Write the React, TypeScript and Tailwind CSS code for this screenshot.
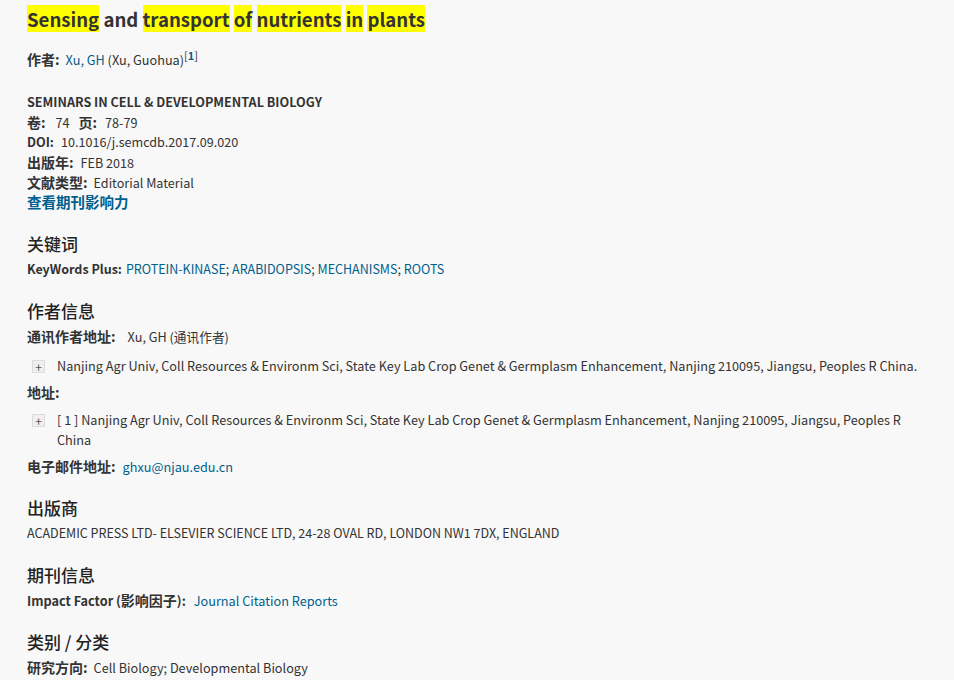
import React from "react";

const Hl = ({ children }: { children: React.ReactNode }) => (
  <span className="bg-[#ffff00]">{children}</span>
);

const Link = ({ children, className = "" }: { children: React.ReactNode; className?: string }) => (
  <a href="#" className={"text-[#005f8c] " + className}>
    {children}
  </a>
);

const Label = ({ children, className = "" }: { children: React.ReactNode; className?: string }) => (
  <span className={"mr-[6px] text-[14px] font-bold text-[#333] " + className}>{children}</span>
);

const PlusRow = ({ children }: { children: React.ReactNode }) => (
  <div className="flex items-start">
    <span className="mt-[4px] ml-[5px] flex h-[13px] w-[13px] shrink-0 items-center justify-center border border-[#dcdcdc] bg-[#efefef] text-[12px] leading-none text-[#555]">
      +
    </span>
    <div className="ml-[12px] text-[12.7px] leading-[20px]">{children}</div>
  </div>
);

const Heading = ({ children }: { children: React.ReactNode }) => (
  <h2 className="mt-[20px] mb-[3px] h-[24px] text-[17px] leading-[24px] font-medium text-[#222]">{children}</h2>
);

export default function App() {
  return (
    <div
      className="min-h-[680px] bg-[#f8f8f8] pt-[6px] pr-[24px] pl-[27px] text-[#333]"
      style={{ fontFamily: '"Noto Sans CJK SC", "Noto Sans", sans-serif' }}
    >
      {/* Title */}
      <h1 className="h-[26px] text-[18.6px] leading-[26px] font-bold text-[#333]">
        <Hl>Sensing</Hl> and <Hl>transport</Hl> <Hl>of</Hl> <Hl>nutrients</Hl> <Hl>in</Hl> <Hl>plants</Hl>
      </h1>

      <div className="mt-[17px] h-[20px] text-[12.7px] leading-[20px]">
        <Label className="mr-[0px]">作者:</Label>
        <Link>Xu, GH</Link> (Xu, Guohua)
        <sup className="text-[11px]">
          [<Link className="font-bold">1</Link>]
        </sup>
      </div>

      {/* Source */}
      <div className="mt-[23px] text-[12.6px] leading-[20px]">
        <div className="h-[20px] font-bold">SEMINARS IN CELL &amp; DEVELOPMENTAL BIOLOGY</div>
        <div className="h-[20px]">
          <Label className="mr-[10px]">卷:</Label>74
          <Label className="mr-[8px] ml-[9px]">页:</Label>78-79
        </div>
        <div className="h-[20px]">
          <span className="mr-[7px] font-bold">DOI:</span>10.1016/j.semcdb.2017.09.020
        </div>
        <div className="h-[20px]">
          <Label className="mr-[7px]">出版年:</Label>FEB 2018
        </div>
        <div className="h-[20px]">
          <Label className="mr-[4px]">文献类型:</Label>Editorial Material
        </div>
        <div className="h-[20px]">
          <Link className="text-[14.5px] font-bold">查看期刊影响力</Link>
        </div>
      </div>

      {/* Keywords */}
      <Heading>关键词</Heading>
      <div className="h-[20px] text-[12.5px] leading-[20px]">
        <span className="mr-[4px] font-bold">KeyWords Plus:</span>
        <Link>PROTEIN-KINASE</Link>; <Link>ARABIDOPSIS</Link>; <Link>MECHANISMS</Link>; <Link>ROOTS</Link>
      </div>

      {/* Author info */}
      <Heading>作者信息</Heading>
      <div className="h-[20px] text-[12.7px] leading-[20px]">
        <Label className="mr-[12px]">通讯作者地址:</Label>Xu, GH (通讯作者)
      </div>
      <div className="mt-[10px]">
        <PlusRow>
          Nanjing Agr Univ, Coll Resources &amp; Environm Sci, State Key Lab Crop Genet &amp; Germplasm Enhancement,
          Nanjing 210095, Jiangsu, Peoples R China.
        </PlusRow>
      </div>
      <div className="mt-[6px] h-[20px] text-[14px] leading-[20px] font-bold">地址:</div>
      <div className="mt-[8px]">
        <PlusRow>
          [ 1 ] Nanjing Agr Univ, Coll Resources &amp; Environm Sci, State Key Lab Crop Genet &amp; Germplasm
          Enhancement, Nanjing 210095, Jiangsu, Peoples R China
        </PlusRow>
      </div>
      <div className="mt-[6px] h-[20px] text-[12.7px] leading-[20px]">
        <Label className="mr-[7px]">电子邮件地址:</Label>
        <Link>ghxu@njau.edu.cn</Link>
      </div>

      {/* Publisher */}
      <Heading>出版商</Heading>
      <div className="h-[20px] text-[12.5px] leading-[20px]">
        ACADEMIC PRESS LTD- ELSEVIER SCIENCE LTD, 24-28 OVAL RD, LONDON NW1 7DX, ENGLAND
      </div>

      {/* Journal */}
      <Heading>期刊信息</Heading>
      <div className="h-[20px] text-[12.7px] leading-[20px]">
        <span className="mr-[8px] font-bold">
          Impact Factor (<span className="text-[14px]">影响因子</span>):
        </span>
        <Link>Journal Citation Reports</Link>
      </div>

      {/* Categories */}
      <Heading>类别 / 分类</Heading>
      <div className="h-[20px] text-[12.7px] leading-[20px]">
        <Label className="mr-[5px]">研究方向:</Label>Cell Biology; Developmental Biology
      </div>
    </div>
  );
}
